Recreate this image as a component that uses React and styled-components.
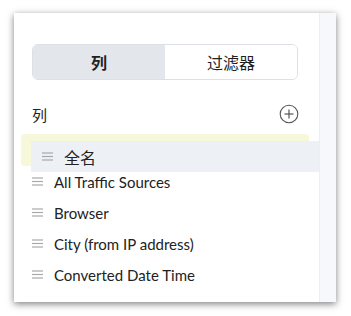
import React from 'react';
import styled, { createGlobalStyle } from 'styled-components';

const Global = createGlobalStyle`
  body {
    margin: 0;
    background: #fff;
    font-family: Lato, "Noto Sans CJK SC", sans-serif;
    color: #222;
  }
`;

const Page = styled.div`
  padding: 13px 15px 14px 14px;
`;

const Card = styled.div`
  width: 322px;
  height: 289px;
  display: flex;
  background: #fff;
  box-shadow: 0 2px 7px rgba(0, 0, 0, 0.5);
`;

const Panel = styled.div`
  width: 305px;
  padding: 31px 21px 0 18px;
  box-sizing: border-box;
  position: relative;
`;

const Strip = styled.div`
  flex: 1;
  background: #f7f8fb;
  border-left: 1px solid #eceef2;
`;

const Segment = styled.div`
  display: flex;
  height: 36px;
  border: 1px solid #dcdfe4;
  border-radius: 6px;
  overflow: hidden;
  box-sizing: border-box;
`;

const SegButton = styled.div`
  flex: 1;
  display: flex;
  align-items: center;
  justify-content: center;
  font-size: 16px;
  font-weight: ${(p) => (p.active ? 700 : 400)};
  background: ${(p) => (p.active ? '#e3e6eb' : '#fff')};
  color: #1f1f1f;
`;

const Header = styled.div`
  display: flex;
  align-items: center;
  justify-content: space-between;
  height: 20px;
  margin-top: 24px;
  font-size: 15px;
`;

const Placeholder = styled.div`
  height: 32px;
  margin: 10px -11px 0 -11px;
  background: #f7f7d9;
  border-radius: 4px;
`;

const Row = styled.div`
  display: flex;
  align-items: center;
  height: 31px;
  font-size: 15px;
  gap: 11px;
`;

const Dragging = styled(Row)`
  position: absolute;
  left: 17px;
  top: 128px;
  width: 288px;
  padding-left: 11px;
  box-sizing: border-box;
  background: #edf1f5;
  font-size: 16px;
`;

const Handle = () => (
  <svg width="11" height="9" viewBox="0 0 11 9">
    <g stroke="#a9a9a9" strokeWidth="1.2">
      <line x1="0" y1="1" x2="11" y2="1" />
      <line x1="0" y1="4.5" x2="11" y2="4.5" />
      <line x1="0" y1="8" x2="11" y2="8" />
    </g>
  </svg>
);

const PlusCircle = () => (
  <svg width="20" height="20" viewBox="0 0 20 20" style={{ marginRight: -1 }}>
    <circle cx="10" cy="10" r="8.8" fill="none" stroke="#555" strokeWidth="1.1" />
    <line x1="10" y1="5.5" x2="10" y2="14.5" stroke="#555" strokeWidth="1.2" />
    <line x1="5.5" y1="10" x2="14.5" y2="10" stroke="#555" strokeWidth="1.2" />
  </svg>
);

const items = ['All Traffic Sources', 'Browser', 'City (from IP address)', 'Converted Date Time'];

export default function App() {
  return (
    <Page>
      <Global />
      <Card>
        <Panel>
          <Segment>
            <SegButton active>列</SegButton>
            <SegButton>过滤器</SegButton>
          </Segment>
          <Header>
            <span>列</span>
            <PlusCircle />
          </Header>
          <Placeholder />
          {items.map((t) => (
            <Row key={t}>
              <Handle />
              <span>{t}</span>
            </Row>
          ))}
          <Dragging>
            <Handle />
            <span>全名</span>
          </Dragging>
        </Panel>
        <Strip />
      </Card>
    </Page>
  );
}
